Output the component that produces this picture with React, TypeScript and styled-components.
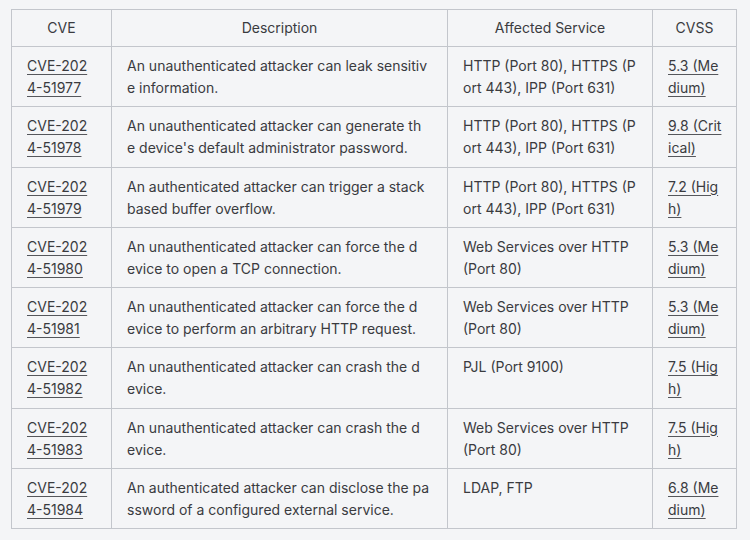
import React from "react";
import styled, { createGlobalStyle } from "styled-components";

const Global = createGlobalStyle`
  html, body { margin: 0; padding: 0; background: #f4f5f7; }
  body { font-family: Inter, "Noto Sans", sans-serif; color: #3a3b3f; }
`;

const Page = styled.div`
  padding: 9px 14px 0 11px;
  width: 750px;
  height: 540px;
  box-sizing: border-box;
`;

const Table = styled.table`
  border-collapse: collapse;
  table-layout: fixed;
  width: 725px;
  font-size: 14px;
  line-height: 22px;
  background: #f4f5f7;
  border: 1px solid #c3c6cc;
`;

const Col = styled.col<{ $w: number }>`
  width: ${(p) => p.$w}px;
`;

const Th = styled.th`
  font-weight: 400;
  text-align: center;
  padding: 7px 14px;
  border: 1px solid #c3c6cc;
  color: #3a3b3f;
`;

const Td = styled.td`
  vertical-align: top;
  text-align: left;
  padding: 8px 10px 7.25px 15px;
  border: 1px solid #c3c6cc;
  white-space: nowrap;
  overflow: hidden;
`;

const Link = styled.a`
  color: #3a3b3f;
  text-decoration: underline;
  text-decoration-color: #55575c;
  text-underline-offset: 3px;
`;

type Cell = string[];
type Row = [Cell, Cell, Cell, Cell];

const httpIpp: Cell = ["HTTP (Port 80), HTTPS (P", "ort 443), IPP (Port 631)"];
const wsHttp: Cell = ["Web Services over HTTP", "(Port 80)"];
const medium: Cell = ["5.3 (Me", "dium)"];
const crash: Cell = ["An unauthenticated attacker can crash the d", "evice."];
const high75: Cell = ["7.5 (Hig", "h)"];

const rows: Row[] = [
  [["CVE-202", "4-51977"], ["An unauthenticated attacker can leak sensitiv", "e information."], httpIpp, medium],
  [["CVE-202", "4-51978"], ["An unauthenticated attacker can generate th", "e device's default administrator password."], httpIpp, ["9.8 (Crit", "ical)"]],
  [["CVE-202", "4-51979"], ["An authenticated attacker can trigger a stack", "based buffer overflow."], httpIpp, ["7.2 (Hig", "h)"]],
  [["CVE-202", "4-51980"], ["An unauthenticated attacker can force the d", "evice to open a TCP connection."], wsHttp, medium],
  [["CVE-202", "4-51981"], ["An unauthenticated attacker can force the d", "evice to perform an arbitrary HTTP request."], wsHttp, medium],
  [["CVE-202", "4-51982"], crash, ["PJL (Port 9100)"], high75],
  [["CVE-202", "4-51983"], crash, wsHttp, high75],
  [["CVE-202", "4-51984"], ["An authenticated attacker can disclose the pa", "ssword of a configured external service."], ["LDAP, FTP"], ["6.8 (Me", "dium)"]],
];

function Lines({ lines }: { lines: string[] }) {
  return (
    <>
      {lines.map((l, i) => (
        <React.Fragment key={i}>
          {i > 0 && <br />}
          {l}
        </React.Fragment>
      ))}
    </>
  );
}

export default function App() {
  return (
    <>
      <Global />
      <Page>
        <Table>
          <colgroup>
            <Col $w={100} />
            <Col $w={336} />
            <Col $w={205} />
            <Col $w={84} />
          </colgroup>
          <thead>
            <tr>
              <Th>CVE</Th>
              <Th>Description</Th>
              <Th>Affected Service</Th>
              <Th>CVSS</Th>
            </tr>
          </thead>
          <tbody>
            {rows.map((r, i) => (
              <tr key={i}>
                <Td><Link href="#"><Lines lines={r[0]} /></Link></Td>
                <Td><Lines lines={r[1]} /></Td>
                <Td><Lines lines={r[2]} /></Td>
                <Td><Link href="#"><Lines lines={r[3]} /></Link></Td>
              </tr>
            ))}
          </tbody>
        </Table>
      </Page>
    </>
  );
}
